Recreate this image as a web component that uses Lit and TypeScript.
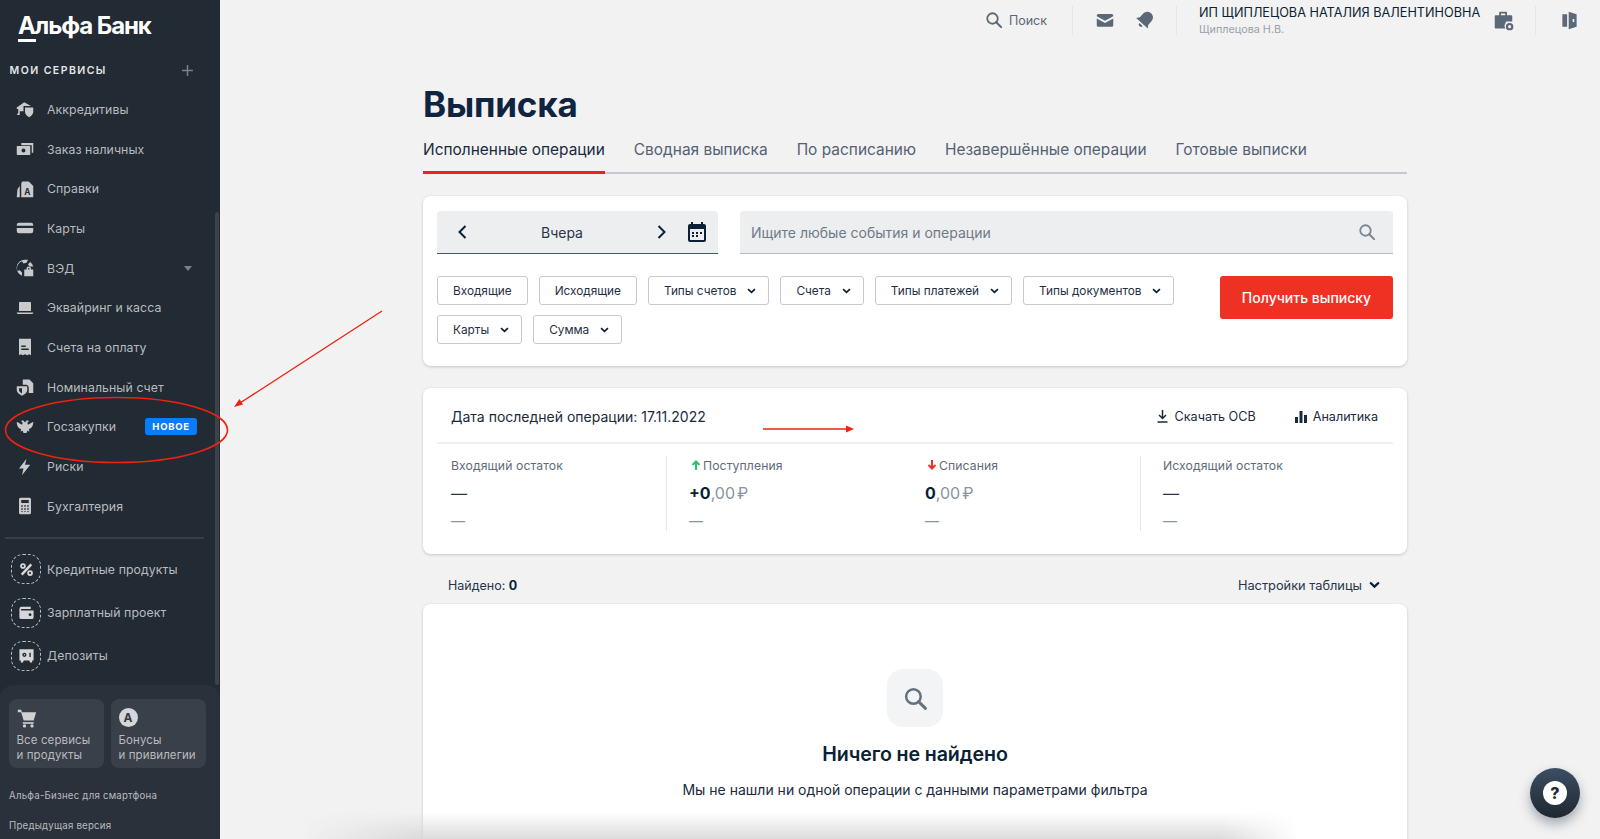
import { LitElement, html, svg, css } from 'lit';
import { customElement } from 'lit/decorators.js';

const icon = (body: unknown, size = 22) =>
  html`<svg width=${size} height=${size} viewBox="0 0 24 24" fill="currentColor">${body}</svg>`;

const icons = {
  accred: svg`<path d="M1 10 11 3l9 5H10v7H5v5H1l2-3v-5H1z"/><path d="M12 10h11v6c0 3-2.700 5.500-5.500 7-2.800-1.500-5.500-4-5.500-7z"/>`,
  cash: svg`<path d="M7 3h16v13h-2V6H7z" transform="translate(0 1)"/><path fill-rule="evenodd" d="M1 9a1 1 0 0 1 1-1h16a1 1 0 0 1 1 1v11H2a1 1 0 0 1-1-1zm9 2.300a2.700 2.700 0 1 0 0 5.400 2.700 2.700 0 0 0 0-5.400z"/>`,
  doc: svg`<path d="M8 2h9l6 6v15H7V5z"/><path d="M5 8v15H1l1-11z"/><text x="15" y="20" font-size="11" font-weight="700" text-anchor="middle" fill="#222a33" font-family="Inter">А</text>`,
  card: svg`<path fill-rule="evenodd" d="M4 5h16a3 3 0 0 1 3 3v1H1V8a3 3 0 0 1 3-3zM1 12h22v4a3 3 0 0 1-3 3H4a3 3 0 0 1-3-3z"/>`,
  globe: svg`<path d="M12 1a11 11 0 0 0-4 21.300V18l-3-3-3 1a10 10 0 0 1 6-13l2 3 4-1 2-4zM19 4l-3 3 2 3h5a11 11 0 0 0-4-6z"/><path fill-rule="evenodd" d="M11 14h3v-1a3 3 0 0 1 6 0v1h3v9H11zm5-1v1h2v-1a1 1 0 0 0-2 0z"/>`,
  laptop: svg`<path d="M5 4h14a1 1 0 0 1 1 1v11H4V5a1 1 0 0 1 1-1z"/><path d="M1 18h22a2 2 0 0 1-2 2H3a2 2 0 0 1-2-2z"/>`,
  bill: svg`<path fill-rule="evenodd" d="M4 1h16v22l-2.500-1.500L15 23l-3-1.500L9 23l-2.500-1.500L4 23zm3 9v2h6v-2zm0 4v2h10v-2z"/>`,
  nominal: svg`<path d="M9 2h9l5 5v13h-6v-7a4 4 0 0 0-3-4H9z"/><path fill-rule="evenodd" d="M1 11h14v5c0 3-3 6-7 7.500-4-1.500-7-4.500-7-7.500zm3 2.500V16c0 2 2 3.500 4 4.500v-7z"/>`,
  eagle: svg`<path d="M12 6c1-1 2-3 4-3l1 2-2 1 1 3 7-4c0 5-2 9-6 10l1 3-3-1-1 3h-4l-1-3-3 1 1-3C3 14 1 10 1 5l7 4 1-3-2-1 1-2c2 0 3 2 4 3z"/>`,
  bolt: svg`<path d="M14 1 4 14h6l-2 9 11-14h-7z"/>`,
  calc: svg`<path fill-rule="evenodd" d="M6 1h12a2 2 0 0 1 2 2v18a2 2 0 0 1-2 2H6a2 2 0 0 1-2-2V3a2 2 0 0 1 2-2zm1 3v4h10V4zm0 7v2h2v-2zm4 0v2h2v-2zm4 0v2h2v-2zM7 15v2h2v-2zm4 0v2h2v-2zm4 0v2h2v-2zM7 19v1h2v-1zm4 0v1h2v-1zm4 0v1h2v-1z"/>`,
  percent: svg`<path d="M17.500 3.500 20 6 6.500 20.500 4 18z"/><path fill-rule="evenodd" d="M7 3a4 4 0 1 1 0 8 4 4 0 0 1 0-8zm0 2.500a1.500 1.500 0 1 0 0 3 1.500 1.500 0 0 0 0-3zM17 13a4 4 0 1 1 0 8 4 4 0 0 1 0-8zm0 2.500a1.500 1.500 0 1 0 0 3 1.500 1.500 0 0 0 0-3z"/>`,
  wallet: svg`<path fill-rule="evenodd" d="M5 4h13v3H5a1 1 0 0 0 0 2h17v10a2 2 0 0 1-2 2H4a2 2 0 0 1-2-2V7a3 3 0 0 1 3-3zm12 9a2 2 0 1 0 0 4 2 2 0 0 0 0-4z"/>`,
  safe: svg`<path fill-rule="evenodd" d="M2 3h20v16h-2v3h-3l-1-3H8l-1 3H4v-3H2zm7 5a3 3 0 1 0 0 6 3 3 0 0 0 0-6zm7 0v6h2V8zM9 10a1 1 0 1 1 0 2 1 1 0 0 1 0-2z"/>`,
  cart: svg`<path d="M1 2h4l1 3h17l-3 10H8L5 5H1z"/><path d="M7 17h13v2H7z"/><circle cx="9" cy="21.500" r="2"/><circle cx="18" cy="21.500" r="2"/>`,
};

const searchGlyph = svg`<circle cx="10" cy="10" r="7" fill="none" stroke="currentColor" stroke-width="2.400"/><path d="m15 15 6.500 6.500" stroke="currentColor" stroke-width="2.800" stroke-linecap="round"/>`;
const chevronDown = html`<svg class="chev" viewBox="0 0 10 7"><path d="M1 1.200 5 5l4-3.800" fill="none" stroke="currentColor" stroke-width="2"/></svg>`;

const services = [
  { label: 'Аккредитивы', glyph: icons.accred },
  { label: 'Заказ наличных', glyph: icons.cash },
  { label: 'Справки', glyph: icons.doc },
  { label: 'Карты', glyph: icons.card },
  { label: 'ВЭД', glyph: icons.globe, caret: true },
  { label: 'Эквайринг и касса', glyph: icons.laptop },
  { label: 'Счета на оплату', glyph: icons.bill },
  { label: 'Номинальный счет', glyph: icons.nominal },
  { label: 'Госзакупки', glyph: icons.eagle, badge: 'НОВОЕ' },
  { label: 'Риски', glyph: icons.bolt },
  { label: 'Бухгалтерия', glyph: icons.calc },
];

const promos = [
  { label: 'Кредитные продукты', glyph: icons.percent },
  { label: 'Зарплатный проект', glyph: icons.wallet },
  { label: 'Депозиты', glyph: icons.safe },
];

const tabs = ['Исполненные операции', 'Сводная выписка', 'По расписанию', 'Незавершённые операции', 'Готовые выписки'];
const plainChips = ['Входящие', 'Исходящие'];
const dropChips = ['Типы счетов', 'Счета', 'Типы платежей', 'Типы документов', 'Карты', 'Сумма'];

@customElement('app-root')
export class AppRoot extends LitElement {
  static override styles = css`
    :host {
      display: block;
      position: relative;
      height: 839px;
      overflow: hidden;
      background: #f2f2f2;
      font-family: Inter, 'Noto Sans', sans-serif;
      color: #0b1f35;
    }
    .page {
      display: flex;
      height: 839px;
    }

    /* sidebar */
    .side {
      position: relative;
      width: 220px;
      flex: none;
      display: flex;
      flex-direction: column;
      background: #222a33;
      color: #b8bbbf;
    }
    .logo-row {
      height: 55px;
      padding: 12px 0 0 18px;
      box-sizing: border-box;
    }
    .logo {
      display: inline-block;
      color: #fff;
      font-size: 24px;
      line-height: 28px;
      font-weight: 700;
      letter-spacing: -1.1px;
      position: relative;
    }
    .logo::after {
      content: '';
      display: block;
      width: 18px;
      height: 3px;
      margin-top: -1px;
      background: #fff;
    }
    .my {
      height: 30px;
      padding: 0 27px 0 9.500px;
      display: flex;
      align-items: center;
      justify-content: space-between;
      color: #e4e5e7;
      font-size: 10.500px;
      font-weight: 600;
      letter-spacing: 1.450px;
    }
    .plus {
      width: 11px;
      height: 11px;
      color: #7c8188;
    }
    .nav {
      padding-top: 4.500px;
    }
    .item {
      height: 39.700px;
      display: flex;
      align-items: center;
      font-size: 12.300px;
      letter-spacing: 0.08px;
      white-space: nowrap;
    }
    .item .ico {
      width: 47px;
      flex: none;
      display: flex;
      justify-content: center;
      padding-left: 3px;
      box-sizing: border-box;
      color: #c8cacd;
    }
    .item svg {
      width: 18px;
      height: 18px;
    }
    .caret {
      margin-left: auto;
      margin-right: 28px;
      width: 0;
      height: 0;
      border-left: 4.500px solid transparent;
      border-right: 4.500px solid transparent;
      border-top: 5px solid #7c8188;
    }
    .badge {
      margin-left: auto;
      margin-right: 23px;
      width: 52px;
      height: 17px;
      border-radius: 3px;
      background: #0a7cf5;
      color: #fff;
      font-size: 9.500px;
      line-height: 17px;
      font-weight: 700;
      letter-spacing: 0.7px;
      text-align: center;
    }
    .rule {
      height: 2px;
      margin: 10.500px 16px 9px 5px;
      background: #373e46;
    }
    .promo {
      height: 43.300px;
      display: flex;
      align-items: center;
      font-size: 12.300px;
      letter-spacing: 0.08px;
    }
    .ring {
      width: 28px;
      height: 28px;
      margin: 0 6px 0 11px;
      border: 1px dashed #b8bbbf;
      border-radius: 12px;
      display: flex;
      align-items: center;
      justify-content: center;
      color: #d6d7d9;
    }
    .ring svg {
      width: 17px;
      height: 17px;
    }
    .foot {
      margin-top: auto;
      height: 154px;
      box-sizing: border-box;
      padding: 14px 9px 0;
      border-radius: 14px 14px 0 0;
      background: #2a313a;
    }
    .tiles {
      display: grid;
      grid-template-columns: 95px 95px;
      gap: 7px;
    }
    .tile {
      height: 69px;
      box-sizing: border-box;
      padding: 9px 7.500px 0;
      border-radius: 8px;
      background: #3a4049;
      font-size: 11.500px;
      line-height: 15px;
      letter-spacing: 0.1px;
      white-space: nowrap;
    }
    .tile svg {
      display: block;
      width: 20px;
      height: 20px;
      margin-bottom: 5px;
      color: #cfd1d3;
    }
    .a-mark {
      width: 19px;
      height: 19px;
      margin-bottom: 6px;
      border-radius: 50%;
      background: #d5d6d8;
      color: #343a43;
      font-size: 12px;
      line-height: 19px;
      font-weight: 700;
      text-align: center;
    }
    .foot-link {
      font-size: 9.700px;
      letter-spacing: 0.2px;
      line-height: 14px;
      margin-top: 16px;
      white-space: nowrap;
    }
    .foot-link.first {
      margin-top: 21px;
    }
    .thumb {
      position: absolute;
      left: 215px;
      top: 212px;
      width: 4px;
      height: 473px;
      background: #3b424a;
      border-radius: 2px;
    }

    /* main column */
    .main {
      flex: 1;
      min-width: 0;
      display: flex;
      flex-direction: column;
    }
    .top {
      flex: none;
      height: 40px;
      display: flex;
      align-items: center;
      justify-content: flex-end;
      color: #5b6877;
    }
    .top-sep {
      width: 1px;
      height: 29px;
      background: #e5e6e7;
    }
    .find {
      display: flex;
      align-items: center;
      gap: 6px;
      margin-right: 25px;
      font-size: 12.500px;
    }
    .find svg {
      width: 18px;
      height: 18px;
    }
    .top-icons {
      display: flex;
      gap: 22px;
      padding: 0 22px 0 23px;
    }
    .top-icons svg,
    .briefcase,
    .door {
      width: 18px;
      height: 18px;
    }
    .who {
      width: 280px;
      margin: 2px 0 0 22px;
      white-space: nowrap;
    }
    .who b {
      display: block;
      font-weight: 400;
      font-size: 12.700px;
      line-height: 16px;
      color: #0b1f35;
    }
    .who span {
      display: block;
      font-size: 10.800px;
      line-height: 14px;
      margin-top: 2px;
      color: #9aa1a9;
    }
    .briefcase {
      width: 21px;
      height: 21px;
      margin: 0 21px 0 14px;
    }
    .door {
      margin: 0 22px 0 25px;
      width: 17px;
      height: 19px;
    }

    .content {
      width: 984px;
      margin-left: 203px;
    }
    h1 {
      margin: 42px 0 0;
      font-size: 35px;
      line-height: 44px;
      font-weight: 700;
      letter-spacing: -0.2px;
      color: #0f2440;
    }
    .tabs {
      display: flex;
      gap: 29px;
      height: 46px;
      margin-top: 2px;
      border-bottom: 2px solid #c5c8ce;
      box-sizing: border-box;
      font-size: 15.450px;
      color: #546172;
      white-space: nowrap;
    }
    .tab {
      height: 46px;
      padding-top: 11px;
      box-sizing: border-box;
      line-height: 22px;
    }
    .tab.on {
      color: #1a2a3d;
      border-bottom: 3px solid #f2201a;
    }
    .card {
      background: #fff;
      border-radius: 8px;
      box-shadow: 0 1px 3px rgba(11, 31, 53, 0.2);
    }
    .filters {
      margin-top: 22px;
      height: 170px;
      box-sizing: border-box;
      padding: 15px 14px 0;
    }
    .fields {
      display: grid;
      grid-template-columns: 281px 1fr;
      gap: 22px;
    }
    .date,
    .query {
      height: 43px;
      display: flex;
      align-items: center;
      box-sizing: border-box;
      border-radius: 4px 4px 0 0;
      background: #edeef0;
      border-bottom: 1px solid #b6bbc2;
      font-size: 14px;
    }
    .date {
      border-bottom-color: #46566a;
      padding: 0 12px 0 21px;
      color: #26364a;
    }
    .date span {
      flex: 1;
      text-align: center;
    }
    .date .arrow {
      width: 9px;
      height: 14px;
      color: #0b1f35;
    }
    .date .cal {
      width: 18px;
      height: 20px;
      margin-left: 22px;
      color: #0b1f35;
    }
    .query {
      padding: 0 17px 0 11px;
      justify-content: space-between;
      color: #6f7a87;
    }
    .query svg {
      width: 18px;
      height: 18px;
      color: #7b8692;
    }
    .filter-row {
      display: flex;
      justify-content: space-between;
      margin-top: 22px;
    }
    .chips {
      width: 740px;
      display: flex;
      flex-wrap: wrap;
      gap: 10px 11px;
    }
    .chip {
      height: 29px;
      padding: 0 15px;
      display: flex;
      align-items: center;
      gap: 11px;
      box-sizing: border-box;
      border: 1px solid #c5c9d0;
      border-radius: 3px;
      font-size: 11.800px;
      color: #1f2f42;
      white-space: nowrap;
    }
    .chip.drop {
      padding-right: 12px;
    }
    .chev {
      width: 9px;
      height: 6px;
      color: #0b1f35;
      flex: none;
    }
    .get {
      width: 173px;
      height: 43px;
      border-radius: 3px;
      background: #ef3124;
      color: #fff;
      font-size: 14px;
      font-weight: 500;
      line-height: 43px;
      text-align: center;
    }
    .summary {
      margin-top: 22px;
      height: 166px;
      box-sizing: border-box;
      padding: 0 14px;
    }
    .sum-head {
      height: 56px;
      display: flex;
      align-items: center;
      padding: 2px 15px 0 14px;
      box-sizing: border-box;
      border-bottom: 2px solid #f0f0f1;
      font-size: 14px;
      color: #1a2a3d;
    }
    .sum-head .last {
      margin-right: auto;
    }
    .action {
      display: flex;
      align-items: center;
      gap: 6px;
      font-size: 12.600px;
      margin-left: 38px;
    }
    .action svg {
      width: 13px;
      height: 13px;
    }
    .cols {
      display: grid;
      grid-template-columns: 229px 237px 237px 1fr;
      margin-top: 12px;
    }
    .col {
      height: 75px;
      box-sizing: border-box;
      padding-left: 22px;
      font-size: 12.200px;
      color: #5f6b79;
    }
    .col:first-child {
      padding-left: 14px;
    }
    .col.split {
      border-left: 1px solid #e4e5e7;
    }
    .col-label {
      display: flex;
      align-items: center;
      gap: 2px;
      height: 18px;
      letter-spacing: 0.1px;
    }
    .col-label svg {
      width: 10px;
      height: 10px;
      margin-left: 2px;
    }
    .amount {
      height: 30px;
      margin-top: 4px;
      display: flex;
      align-items: center;
      font-size: 16px;
      color: #8a94a0;
    }
    .amount b {
      color: #0b1f35;
      font-weight: 700;
    }
    .amount i {
      font-style: normal;
      margin-left: 2px;
    }
    .dash {
      font-size: 14px;
      height: 24px;
      line-height: 26px;
      color: #8a94a0;
    }
    .col .big {
      color: #26364a;
    }
    .found {
      flex: none;
      height: 50px;
      box-sizing: border-box;
      padding: 12px 27px 0 25px;
      display: flex;
      align-items: center;
      justify-content: space-between;
      font-size: 12.500px;
      color: #26364a;
    }
    .found b {
      color: #0b1f35;
    }
    .found .tune {
      display: flex;
      align-items: center;
      gap: 7px;
      font-size: 12.800px;
    }
    .found .chev {
      width: 11px;
      height: 8px;
    }
    .empty {
      height: 300px;
      box-sizing: border-box;
      padding-top: 65px;
      text-align: center;
      border-radius: 8px 8px 0 0;
    }
    .bubble {
      width: 56px;
      height: 58px;
      margin: 0 auto;
      border-radius: 16px;
      background: #f3f4f5;
      color: #67717e;
      display: flex;
      align-items: center;
      justify-content: center;
    }
    .bubble svg {
      width: 25px;
      height: 25px;
    }
    .empty h2 {
      margin: 13px 0 0;
      font-size: 19.600px;
      line-height: 28px;
      font-weight: 600;
      letter-spacing: -0.1px;
    }
    .empty p {
      margin: 12px 0 0;
      font-size: 14px;
      line-height: 20px;
      color: #1a2a3d;
    }

    /* things lying over the page */
    .fade {
      position: absolute;
      left: 300px;
      top: 812px;
      width: 1000px;
      height: 27px;
      background: linear-gradient(to bottom, rgba(220, 220, 220, 0), rgba(214, 214, 214, 0.85));
      -webkit-mask-image: linear-gradient(to right, transparent, #000 12%, #000 92%, transparent);
      mask-image: linear-gradient(to right, transparent, #000 12%, #000 92%, transparent);
    }
    .help {
      position: absolute;
      left: 1530px;
      top: 768px;
      width: 50px;
      height: 50px;
      border-radius: 50%;
      background: linear-gradient(to bottom, #3c4f64, #1e2730);
      box-shadow: 0 6px 12px rgba(11, 31, 53, 0.35);
      display: flex;
      align-items: center;
      justify-content: center;
    }
    .help span {
      width: 24px;
      height: 24px;
      border-radius: 50%;
      background: #fff;
      color: #222a33;
      font-size: 16px;
      line-height: 24px;
      font-weight: 800;
      text-align: center;
    }
    .notes {
      position: absolute;
      left: 0;
      top: 0;
      pointer-events: none;
    }
  `;

  override render() {
    return html`
      <div class="page">
        ${this.renderSide()}
        <div class="main">
          ${this.renderTop()}
          <div class="content">
            <h1>Выписка</h1>
            <div class="tabs">
              ${tabs.map((t, i) => html`<div class="tab ${i === 0 ? 'on' : ''}">${t}</div>`)}
            </div>
            ${this.renderFilters()} ${this.renderSummary()}
            <div class="found">
              <div>Найдено: <b>0</b></div>
              <div class="tune">Настройки таблицы ${chevronDown}</div>
            </div>
            <div class="card empty">
              <div class="bubble"><svg viewBox="0 0 24 24">${searchGlyph}</svg></div>
              <h2>Ничего не найдено</h2>
              <p>Мы не нашли ни одной операции с данными параметрами фильтра</p>
            </div>
          </div>
        </div>
      </div>
      <div class="fade"></div>
      <div class="help"><span>?</span></div>
      <svg class="notes" width="1600" height="839" viewBox="0 0 1600 839">
        <ellipse cx="116.500" cy="430" rx="111" ry="32.500" fill="none" stroke="#ee2211" stroke-width="1.600" />
        <path d="M382 311 240 403" stroke="#ee2211" stroke-width="1.300" fill="none" />
        <path d="m234 407 9-2.500-3.500-5.500z" fill="#ee2211" />
        <path d="M763 429h84" stroke="#ee2211" stroke-width="1.300" fill="none" />
        <path d="M854 429l-8-3.500v7z" fill="#ee2211" />
      </svg>
    `;
  }

  private renderSide() {
    return html`
      <aside class="side">
        <div class="logo-row"><div class="logo">Альфа Банк</div></div>
        <div class="my">
          МОИ СЕРВИСЫ
          <svg class="plus" viewBox="0 0 11 11"><path d="M5.500 0v11M0 5.500h11" stroke="currentColor" stroke-width="1.500" /></svg>
        </div>
        <nav class="nav">
          ${services.map(
            (s) => html`<div class="item">
              <span class="ico">${icon(s.glyph)}</span>${s.label}
              ${s.caret ? html`<i class="caret"></i>` : ''}
              ${s.badge ? html`<span class="badge">${s.badge}</span>` : ''}
            </div>`
          )}
        </nav>
        <div class="rule"></div>
        ${promos.map(
          (p) => html`<div class="promo"><span class="ring">${icon(p.glyph)}</span>${p.label}</div>`
        )}
        <div class="foot">
          <div class="tiles">
            <div class="tile">${icon(icons.cart)}Все сервисы<br />и продукты</div>
            <div class="tile"><div class="a-mark">А</div>Бонусы<br />и привилегии</div>
          </div>
          <div class="foot-link first">Альфа-Бизнес для смартфона</div>
          <div class="foot-link">Предыдущая версия</div>
        </div>
        <div class="thumb"></div>
      </aside>
    `;
  }

  private renderTop() {
    return html`
      <header class="top">
        <div class="find"><svg viewBox="0 0 24 24">${searchGlyph}</svg>Поиск</div>
        <div class="top-sep"></div>
        <div class="top-icons">
          <svg viewBox="0 0 24 24" fill="currentColor"><path d="M1 6a2 2 0 0 1 2-2h18a2 2 0 0 1 2 2v1l-11 6L1 7zm0 4 11 6 11-6v9a2 2 0 0 1-2 2H3a2 2 0 0 1-2-2z" /></svg>
          <svg viewBox="0 0 24 24" fill="currentColor"><g transform="rotate(42 12 12)"><path d="M12 0c5 0 7.500 3.500 7.500 8v6l3 4h-21l3-4V8c0-4.500 2.500-8 7.500-8z" /><path d="M9 20h6a3 3 0 0 1-6 0z" /></g></svg>
        </div>
        <div class="top-sep"></div>
        <div class="who">
          <b>ИП ЩИПЛЕЦОВА НАТАЛИЯ ВАЛЕНТИНОВНА</b>
          <span>Щиплецова Н.В.</span>
        </div>
        <svg class="briefcase" viewBox="0 0 24 24" fill="currentColor"><path d="M8 2h7a1 1 0 0 1 1 1v3h5a1 1 0 0 1 1 1v6h-7l-2 5 1 3H3a1 1 0 0 1-1-1V7a1 1 0 0 1 1-1h4V3a1 1 0 0 1 1-1zm1 2v2h5V4z" fill-rule="evenodd" /><circle cx="19" cy="19" r="3" fill="none" stroke="currentColor" stroke-width="2.500" /></svg>
        <div class="top-sep"></div>
        <svg class="door" viewBox="0 0 20 24" fill="currentColor"><path fill-rule="evenodd" d="M1 4h6v16H1zM9 1l10 3v16L9 23zm5 9v4h2v-4z" /></svg>
      </header>
    `;
  }

  private renderFilters() {
    return html`
      <section class="card filters">
        <div class="fields">
          <div class="date">
            <svg class="arrow" viewBox="0 0 9 14"><path d="M7.500 1 1.500 7l6 6" fill="none" stroke="currentColor" stroke-width="2" /></svg>
            <span>Вчера</span>
            <svg class="arrow" viewBox="0 0 9 14"><path d="m1.500 1 6 6-6 6" fill="none" stroke="currentColor" stroke-width="2" /></svg>
            <svg class="cal" viewBox="0 0 18 20" fill="currentColor"><path fill-rule="evenodd" d="M3 0h2v2h8V0h2v2h1a2 2 0 0 1 2 2v14a2 2 0 0 1-2 2H2a2 2 0 0 1-2-2V4a2 2 0 0 1 2-2h1zM2 7v11h14V7zm2 3h2v2H4zm4 0h2v2H8zm4 0h2v2h-2zm-8 3h2v2H4zm4 0h2v2H8z" /></svg>
          </div>
          <div class="query">Ищите любые события и операции<svg viewBox="0 0 24 24">${searchGlyph}</svg></div>
        </div>
        <div class="filter-row">
          <div class="chips">
            ${plainChips.map((c) => html`<div class="chip">${c}</div>`)}
            ${dropChips.map((c) => html`<div class="chip drop">${c}${chevronDown}</div>`)}
          </div>
          <div class="get">Получить выписку</div>
        </div>
      </section>
    `;
  }

  private renderSummary() {
    const up = html`<svg viewBox="0 0 10 10"><path d="M5 10V2M1.500 5 5 1.500 8.500 5" fill="none" stroke="#2fc26e" stroke-width="2" /></svg>`;
    const down = html`<svg viewBox="0 0 10 10"><path d="M5 0v8M1.500 5 5 8.500 8.500 5" fill="none" stroke="#ef3124" stroke-width="2" /></svg>`;
    return html`
      <section class="card summary">
        <div class="sum-head">
          <div class="last">Дата последней операции: 17.11.2022</div>
          <div class="action">
            <svg viewBox="0 0 13 13"><path d="M6.500 0v8M3 5l3.500 3.500L10 5M1.500 12h10" fill="none" stroke="currentColor" stroke-width="1.500" /></svg>Скачать ОСВ
          </div>
          <div class="action">
            <svg viewBox="0 0 13 13" fill="currentColor"><path d="M1 7h3v6H1zM5.500 1h3v12h-3zM10 5h3v8h-3z" /></svg>Аналитика
          </div>
        </div>
        <div class="cols">
          <div class="col">
            <div class="col-label">Входящий остаток</div>
            <div class="amount big">—</div>
            <div class="dash">—</div>
          </div>
          <div class="col split">
            <div class="col-label">${up}Поступления</div>
            <div class="amount"><b>+0</b>,00<i>₽</i></div>
            <div class="dash">—</div>
          </div>
          <div class="col">
            <div class="col-label">${down}Списания</div>
            <div class="amount"><b>0</b>,00<i>₽</i></div>
            <div class="dash">—</div>
          </div>
          <div class="col split">
            <div class="col-label">Исходящий остаток</div>
            <div class="amount big">—</div>
            <div class="dash">—</div>
          </div>
        </div>
      </section>
    `;
  }
}

declare global {
  interface HTMLElementTagNameMap {
    'app-root': AppRoot;
  }
}
